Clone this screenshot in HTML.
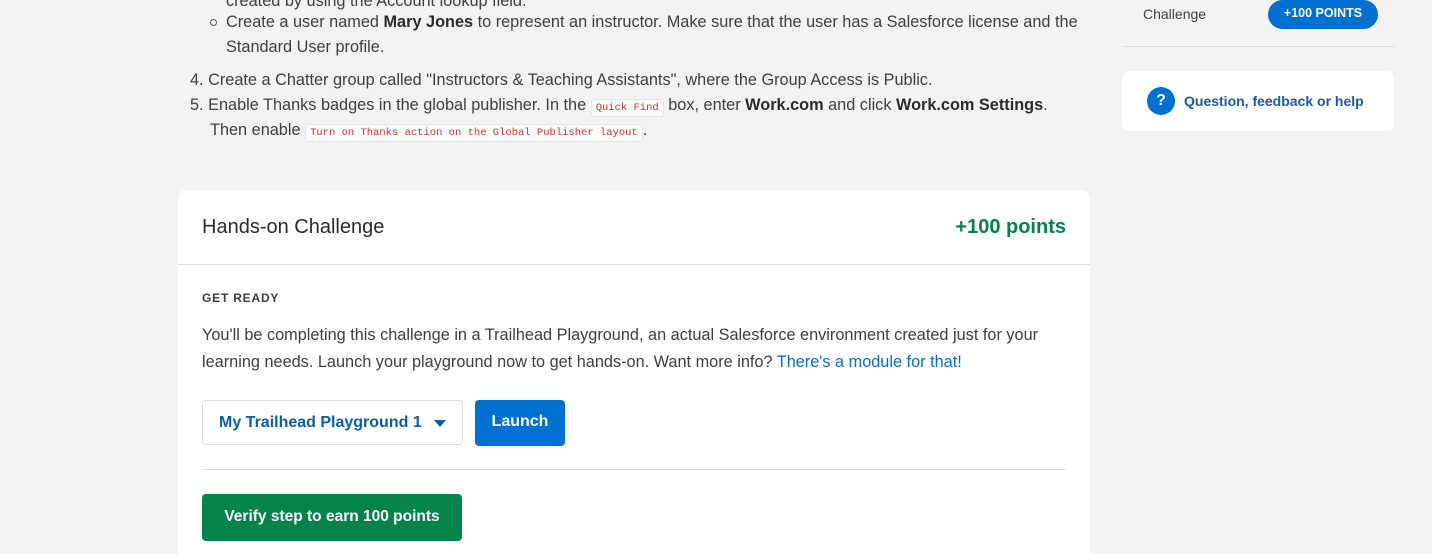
<!DOCTYPE html>
<html><head><meta charset="utf-8"><style>
*{margin:0;padding:0;box-sizing:border-box}
html,body{width:1432px;height:554px;overflow:hidden}
body{background:#f3f3f3;font-family:"Liberation Sans",sans-serif;color:#3e3e3c;position:relative}
.t{position:absolute;white-space:nowrap;font-size:16.3px;line-height:20px}
b{font-weight:bold;color:#2b2b2b}
code{font-family:"Liberation Mono",monospace;font-size:10.5px;color:#c23934;background:#fafafa;border:1px solid #e5e5e5;border-radius:3px;padding:2px 4px}
.card{position:absolute;left:178px;top:190px;width:912px;height:364px;background:#fff;border-radius:8px 8px 0 0}
.abs{position:absolute}
</style></head><body>
<div class="t" style="left:226px;top:-9px">created by using the Account lookup field.</div>
<div class="abs" style="left:210px;top:19px;width:7px;height:7px;border:1px solid #555;border-radius:50%"></div>
<div class="t" style="left:226px;top:12px">Create a user named <b>Mary Jones</b> to represent an instructor. Make sure that the user has a Salesforce license and the</div>
<div class="t" style="left:226px;top:37px">Standard User profile.</div>
<div class="t" style="left:190px;top:70px">4. Create a Chatter group called "Instructors &amp; Teaching Assistants", where the Group Access is Public.</div>
<div class="t" style="left:190px;top:95px">5. Enable Thanks badges in the global publisher. In the <code>Quick Find</code> box, enter <b>Work.com</b> and click <b>Work.com Settings</b>.</div>
<div class="t" style="left:210px;top:120px">Then enable <code>Turn on Thanks action on the Global Publisher layout</code>.</div>

<div class="card">
<div class="abs" style="left:24px;top:26px;font-size:20px;color:#2b2b2b">Hands-on Challenge</div>
<div class="abs" style="right:24px;top:26px;font-size:20px;color:#04844b;font-weight:bold">+100 points</div>
<div class="abs" style="left:0;top:74px;width:912px;height:1px;background:#ddd"></div>
<div class="abs" style="left:24px;top:101px;font-size:12px;font-weight:bold;letter-spacing:0.8px;color:#3e3e3c">GET READY</div>
<div class="t" style="left:24px;top:135px">You'll be completing this challenge in a Trailhead Playground, an actual Salesforce environment created just for your</div>
<div class="t" style="left:24px;top:162px">learning needs. Launch your playground now to get hands-on. Want more info? <span style="color:#0b6bcb">There's a module for that!</span></div>
<div class="abs" style="left:24px;top:210px;width:261px;height:45px;border:1px solid #ddd;border-radius:4px;color:#0b5cab;font-weight:bold;font-size:16px;line-height:43px;padding-left:16px">My Trailhead Playground 1
<span style="position:absolute;left:231px;top:19px;width:0;height:0;border-left:6px solid transparent;border-right:6px solid transparent;border-top:7px solid #0b5cab"></span></div>
<div class="abs" style="left:297px;top:210px;width:90px;height:46px;background:#0070d2;border-radius:4px;color:#fff;font-weight:bold;font-size:16px;line-height:44px;text-align:center">Launch</div>
<div class="abs" style="left:24px;top:279px;width:864px;height:1px;background:#ddd"></div>
<div class="abs" style="left:24px;top:304px;width:260px;height:47px;background:#04844b;border-radius:4px;color:#fff;font-weight:bold;font-size:15.5px;line-height:46px;text-align:center">Verify step to earn 100 points</div>
</div>

<div class="abs" style="left:1143px;top:6px;font-size:14px;color:#3e3e3c">Challenge</div>
<div class="abs" style="left:1268px;top:0;width:110px;height:29px;background:#0070d2;border-radius:15px;color:#fff;font-weight:bold;font-size:12.5px;line-height:27px;text-align:center">+100 POINTS</div>
<div class="abs" style="left:1122px;top:46px;width:272px;height:1px;background:#ddd"></div>
<div class="abs" style="left:1122px;top:71px;width:272px;height:60px;background:#fff;border-radius:7px">
<div class="abs" style="left:25px;top:16px;width:28px;height:28px;background:#0070d2;border-radius:50%;color:#fff;font-weight:bold;font-size:16px;line-height:28px;text-align:center">?</div>
<div class="abs" style="left:62px;top:22px;font-size:14px;font-weight:bold;color:#1a5aa6">Question, feedback or help</div>
</div>
</body></html>
